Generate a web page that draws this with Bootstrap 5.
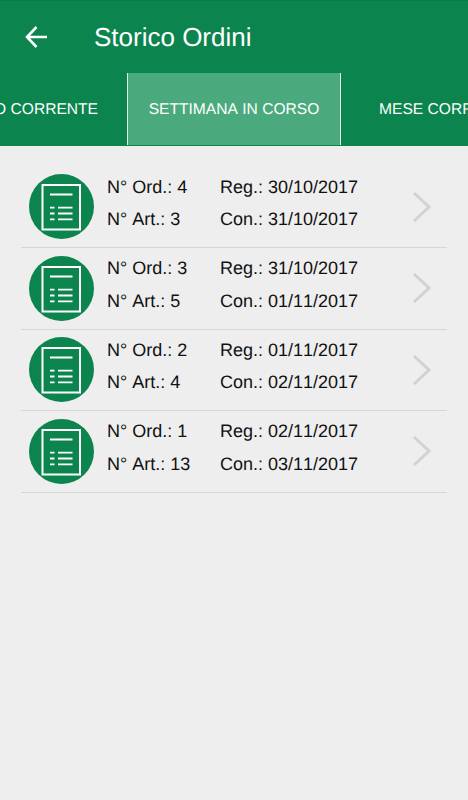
<!DOCTYPE html>
<html lang="it">

<head>
  <meta charset="UTF-8" />
  <title>Storico Ordini</title>
  <meta name="viewport" content="width=device-width, initial-scale=1" />
  <link href="https://cdn.jsdelivr.net/npm/bootstrap@5.3.0/dist/css/bootstrap.min.css" rel="stylesheet" />
  <style>
    body {
      background-color: #eeeeee;
      font-family: "Liberation Sans", Arial, sans-serif;
      color: #111;
      height: 800px;
      overflow: hidden;
      text-rendering: geometricPrecision;
      font-kerning: none;
    }

    .app-bar {
      background-color: #0b844e;
      border-top: 1px solid #0a7a48;
      height: 73px;
      padding-left: 24px;
      color: #fff;
    }

    .app-title {
      font-size: 26px;
      margin-left: 44px;
      line-height: 1;
    }

    .tab-strip {
      background-color: #0b844e;
      border-bottom: 1px solid #0a8744;
      height: 73px;
      padding-top: 1px;
      color: #fff;
      font-size: 15.6px;
      overflow: hidden;
      white-space: nowrap;
    }

    .tab-first {
      width: 127px;
      padding-right: 29px;
    }

    .tab-active {
      width: 214px;
      margin-top: -1px;
      padding-top: 1px;
      background-color: #4aaa7d;
      border-left: 1px solid #e4f2eb;
      border-right: 1px solid #e4f2eb;
    }

    .tab-last {
      padding-left: 38px;
    }

    .order-list {
      padding: 20.5px 21px 0;
    }

    .order-row {
      height: 81.5px;
      border-bottom: 1px solid #d6d6d6;
      padding-left: 8px;
      padding-right: 16px;
      font-size: 18px;
    }

    .order-icon {
      width: 65px;
      height: 65px;
      margin-right: 13px;
    }

    .col-num {
      width: 113px;
    }

    .text-line {
      line-height: 32.5px;
      padding-bottom: 7px;
    }
  </style>
</head>

<body>

  <header class="app-bar d-flex align-items-center">
    <svg width="26" height="24" viewBox="0 0 26 24" fill="none" stroke="#fff" stroke-width="2.6">
      <path d="M23 12H3.5M12.5 2 3 12l9.5 10" />
    </svg>
    <div class="app-title">Storico Ordini</div>
  </header>

  <nav class="tab-strip d-flex">
    <div class="tab-first d-flex flex-shrink-0 align-items-center justify-content-end">GIORNO CORRENTE</div>
    <div class="tab-active d-flex flex-shrink-0 align-items-center justify-content-center">SETTIMANA IN CORSO</div>
    <div class="tab-last d-flex flex-shrink-0 align-items-center">MESE CORRENTE</div>
  </nav>

  <main class="order-list" id="orders"></main>

  <script>
    const orders = [
      { ord: 4, art: 3, reg: '30/10/2017', con: '31/10/2017' },
      { ord: 3, art: 5, reg: '31/10/2017', con: '01/11/2017' },
      { ord: 2, art: 4, reg: '01/11/2017', con: '02/11/2017' },
      { ord: 1, art: 13, reg: '02/11/2017', con: '03/11/2017' }
    ];

    document.getElementById('orders').innerHTML = orders.map(o => `
      <div class="order-row d-flex align-items-center">
        <svg class="order-icon flex-shrink-0" viewBox="0 0 65 65">
          <circle cx="32.5" cy="32.5" r="32.5" fill="#0b844e" />
          <rect x="13.5" y="11" width="37.5" height="44.5" fill="none" stroke="#fff" stroke-width="2" />
          <path d="M21 20.5H43.5M29 33.7H43.5M29 39.5H43.5M29 45.3H43.5M21 33.7H25.5M21 39.5H25.5M21 45.3H25.5" stroke="#fff" stroke-width="1.8" />
        </svg>
        <div class="col-num text-line">
          <div>N° Ord.: ${o.ord}</div>
          <div>N° Art.: ${o.art}</div>
        </div>
        <div class="flex-grow-1 text-line">
          <div>Reg.: ${o.reg}</div>
          <div>Con.: ${o.con}</div>
        </div>
        <svg width="19" height="32" viewBox="0 0 19 32" fill="none" stroke="#d2d2d2" stroke-width="3">
          <path d="M2 2 17 16 2 30" />
        </svg>
      </div>`).join('');
  </script>

  <script src="https://cdn.jsdelivr.net/npm/bootstrap@5.3.0/dist/js/bootstrap.bundle.min.js"></script>
</body>

</html>
